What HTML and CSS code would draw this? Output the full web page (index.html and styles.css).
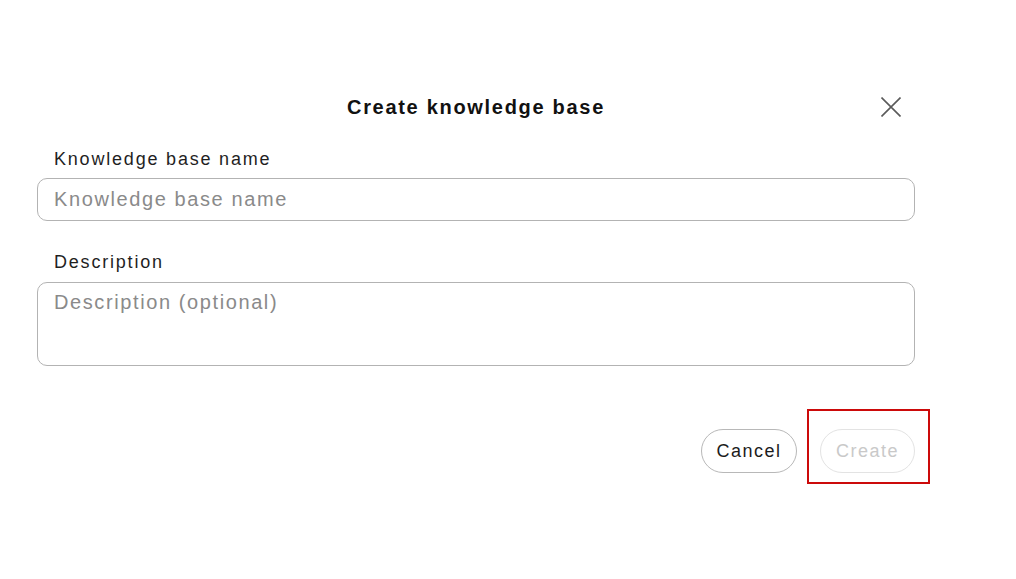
FILE: index.html
```html
<!DOCTYPE html>
<html lang="en">
<head>
<meta charset="utf-8">
<title>Create knowledge base</title>
<link rel="stylesheet" href="styles.css">
</head>
<body>
<div class="dialog">
  <div class="header">
    <span></span>
    <h1 class="title">Create knowledge base</h1>
    <button class="close" aria-label="Close">
      <svg width="20" height="20" viewBox="0 0 20 20"><path d="M0.5 0.5 L19.5 19.5 M19.5 0.5 L0.5 19.5" stroke="#5a5a5a" stroke-width="1.6" fill="none"/></svg>
    </button>
  </div>
  <label class="label label-name">Knowledge base name</label>
  <input class="field" type="text" placeholder="Knowledge base name">
  <label class="label label-desc">Description</label>
  <textarea class="field area" placeholder="Description (optional)"></textarea>
  <div class="actions">
    <button class="btn btn-cancel">Cancel</button>
    <span class="highlight"><button class="btn btn-create" disabled>Create</button></span>
  </div>
</div>
</body>
</html>
```
FILE: styles.css
```css
html, body {
  margin: 0;
  padding: 0;
  background: #ffffff;
}
body {
  font-family: "Liberation Sans", Arial, sans-serif;
  color: #1f1f1f;
  min-height: 579px;
}
.dialog {
  width: 878px;
  margin-left: 37px;
  padding-top: 93px;
  padding-bottom: 60px;
  display: flex;
  flex-direction: column;
}
.header {
  display: grid;
  grid-template-columns: 1fr auto 1fr;
  align-items: center;
  height: 28px;
}
.title {
  margin: 0;
  font-size: 20px;
  line-height: 28px;
  font-weight: 700;
  letter-spacing: 1.7px;
  color: #111;
}
.close {
  justify-self: end;
  margin-right: 11px;
  width: 26px;
  height: 26px;
  padding: 0;
  border: none;
  background: none;
  display: flex;
  align-items: center;
  justify-content: center;
}
.label {
  font-size: 18px;
  line-height: 22px;
  letter-spacing: 1.8px;
  padding-left: 17px;
  color: #1f1f1f;
}
.label-name { margin-top: 27px; }
.label-desc { margin-top: 30px; }
.field {
  box-sizing: border-box;
  width: 878px;
  margin: 8px 0 0 0;
  border: 1.5px solid #b3b3b3;
  border-radius: 10px;
  font-family: "Liberation Sans", Arial, sans-serif;
  font-size: 20px;
  letter-spacing: 1.6px;
  color: #1f1f1f;
  background: #fff;
  outline: none;
}
input.field {
  height: 43px;
  padding: 0 16px;
}
.area {
  height: 84px;
  margin-top: 9px;
  padding: 8px 16px;
  line-height: 22px;
  resize: none;
  display: block;
}
.field::placeholder {
  color: #8a8a8a;
  opacity: 1;
}
.actions {
  margin-top: 63px;
  display: flex;
  justify-content: flex-end;
  gap: 23px;
}
.btn {
  box-sizing: border-box;
  height: 44px;
  border-radius: 22px;
  font-family: "Liberation Sans", Arial, sans-serif;
  font-size: 18px;
  letter-spacing: 1.5px;
  background: #fff;
  padding: 0;
}
.btn-cancel {
  width: 96px;
  border: 1.5px solid #b8b8b8;
  color: #1c1c1c;
}
.btn-create {
  width: 95px;
  border: 1.5px solid #e3e3e3;
  color: #c9c9c9;
  display: block;
}
.highlight {
  position: relative;
  display: block;
}
.highlight::after {
  content: "";
  position: absolute;
  left: -13px;
  right: -15px;
  top: -20px;
  bottom: -11px;
  border: 2.5px solid #cc0a0a;
  pointer-events: none;
}
```
